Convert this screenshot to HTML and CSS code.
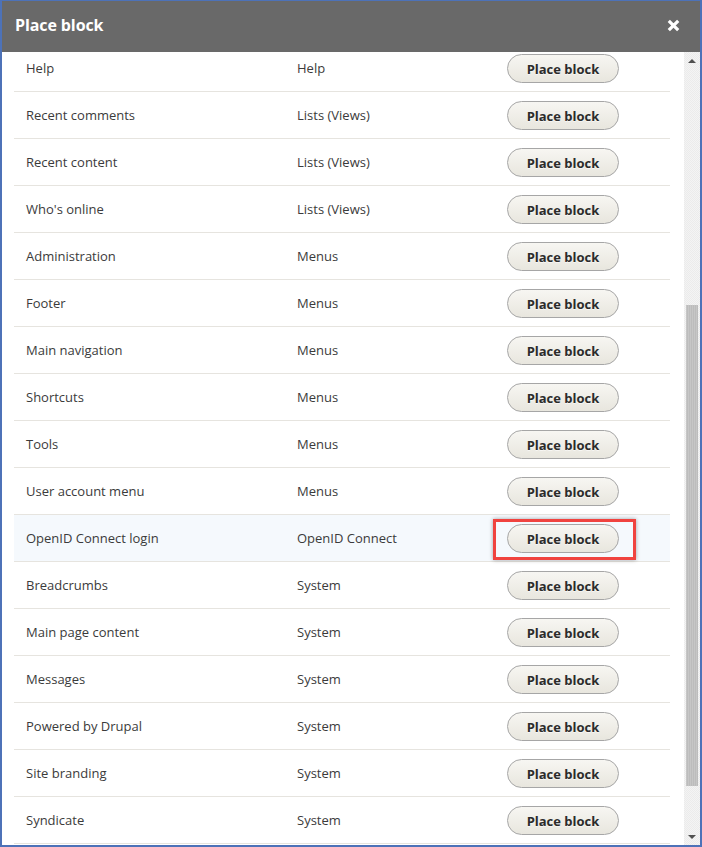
FILE: index.html
```html
<!DOCTYPE html>
<html>
<head>
<meta charset="utf-8">
<link rel="stylesheet" href="styles.css">
</head>
<body>
<div class="dialog">
  <div class="titlebar">
    <span class="title">Place block</span>
    <button class="close" aria-label="Close">
      <svg width="13" height="13" viewBox="0 0 13 13"><path d="M1.8 1.8 L11.2 11.2 M11.2 1.8 L1.8 11.2" stroke="#fff" stroke-width="3.2" stroke-linecap="butt"/></svg>
    </button>
  </div>
  <div class="body">
    <div class="viewport">
      <div class="list">
        <div class="row"><span class="c-name">Help</span><span class="c-cat">Help</span><span class="c-op"><a class="btn">Place block</a></span></div>
        <div class="row"><span class="c-name">Recent comments</span><span class="c-cat">Lists (Views)</span><span class="c-op"><a class="btn">Place block</a></span></div>
        <div class="row"><span class="c-name">Recent content</span><span class="c-cat">Lists (Views)</span><span class="c-op"><a class="btn">Place block</a></span></div>
        <div class="row"><span class="c-name">Who's online</span><span class="c-cat">Lists (Views)</span><span class="c-op"><a class="btn">Place block</a></span></div>
        <div class="row"><span class="c-name">Administration</span><span class="c-cat">Menus</span><span class="c-op"><a class="btn">Place block</a></span></div>
        <div class="row"><span class="c-name">Footer</span><span class="c-cat">Menus</span><span class="c-op"><a class="btn">Place block</a></span></div>
        <div class="row"><span class="c-name">Main navigation</span><span class="c-cat">Menus</span><span class="c-op"><a class="btn">Place block</a></span></div>
        <div class="row"><span class="c-name">Shortcuts</span><span class="c-cat">Menus</span><span class="c-op"><a class="btn">Place block</a></span></div>
        <div class="row"><span class="c-name">Tools</span><span class="c-cat">Menus</span><span class="c-op"><a class="btn">Place block</a></span></div>
        <div class="row"><span class="c-name">User account menu</span><span class="c-cat">Menus</span><span class="c-op"><a class="btn">Place block</a></span></div>
        <div class="row hl"><span class="c-name">OpenID Connect login</span><span class="c-cat">OpenID Connect</span><span class="c-op"><a class="btn">Place block</a><span class="callout"></span></span></div>
        <div class="row"><span class="c-name">Breadcrumbs</span><span class="c-cat">System</span><span class="c-op"><a class="btn">Place block</a></span></div>
        <div class="row"><span class="c-name">Main page content</span><span class="c-cat">System</span><span class="c-op"><a class="btn">Place block</a></span></div>
        <div class="row"><span class="c-name">Messages</span><span class="c-cat">System</span><span class="c-op"><a class="btn">Place block</a></span></div>
        <div class="row"><span class="c-name">Powered by Drupal</span><span class="c-cat">System</span><span class="c-op"><a class="btn">Place block</a></span></div>
        <div class="row"><span class="c-name">Site branding</span><span class="c-cat">System</span><span class="c-op"><a class="btn">Place block</a></span></div>
        <div class="row"><span class="c-name">Syndicate</span><span class="c-cat">System</span><span class="c-op"><a class="btn">Place block</a></span></div>
      </div>
    </div>
    <div class="scrollbar">
      <div class="arrow up"></div>
      <div class="track"><div class="thumb"></div></div>
      <div class="arrow down"></div>
    </div>
  </div>
</div>
</body>
</html>
```
FILE: styles.css
```css
html, body {
  margin: 0;
  padding: 0;
  width: 702px;
  height: 847px;
  overflow: hidden;
  background: #fff;
}
.dialog {
  box-sizing: border-box;
  width: 702px;
  height: 847px;
  border: 2px solid #4d72b8;
  border-top-width: 1px;
  display: flex;
  flex-direction: column;
  font-family: "Open Sans", "Noto Sans", sans-serif;
}
.titlebar {
  box-sizing: border-box;
  height: 51px;
  flex: none;
  background: #696969;
  display: flex;
  align-items: center;
  justify-content: space-between;
  padding: 0 20px 4px 13px;
}
.title {
  color: #fff;
  font-weight: 700;
  font-size: 16px;
  letter-spacing: -0.1px;
}
.close {
  background: none;
  border: 0;
  padding: 0;
  width: 13px;
  height: 13px;
  display: flex;
  margin-top: 1px;
}
.body {
  flex: 1;
  display: flex;
  min-height: 0;
}
.viewport {
  flex: 1;
  overflow: hidden;
  padding: 0 14px 0 12px;
}
.list {
  margin-top: -7px;
}
.row {
  height: 46px;
  border-bottom: 1px solid #e6e4df;
  display: flex;
  align-items: center;
  font-size: 13px;
  color: #3b3b3b;
}
.row.hl {
  background: #f5f9fd;
}
.c-name {
  width: 271px;
  padding-left: 12px;
  flex: none;
}
.c-cat {
  width: 198px;
  flex: none;
}
.c-op {
  position: relative;
  padding-left: 12px;
  display: flex;
  align-items: center;
}
.btn {
  box-sizing: border-box;
  display: inline-flex;
  align-items: center;
  justify-content: center;
  width: 112px;
  height: 29px;
  border: 1px solid #a6a6a6;
  border-radius: 15px;
  background: linear-gradient(#f7f6f2, #e8e6de);
  color: #2b2b2b;
  font-weight: 700;
  font-size: 13px;
  text-shadow: 0 1px rgba(255,255,255,0.6);
  margin-top: 1px;
}
.callout {
  position: absolute;
  left: -2px;
  top: -4px;
  width: 143px;
  height: 41px;
  box-sizing: border-box;
  border: 3px solid #f0433f;
  box-shadow: 0 0 4px rgba(0,0,0,0.35);
}
.scrollbar {
  width: 16px;
  flex: none;
  display: flex;
  flex-direction: column;
  background-color: #f0f0f0;
  background-image: repeating-conic-gradient(#f4f4f4 0 25%, #ebebeb 0 50%);
  background-size: 2px 2px;
}
.arrow {
  height: 17px;
  flex: none;
  display: flex;
  align-items: center;
  justify-content: center;
}
.arrow::before {
  content: "";
  border-left: 4px solid transparent;
  border-right: 4px solid transparent;
}
.arrow.up::before {
  border-bottom: 4px solid #505050;
}
.arrow.down::before {
  border-top: 4px solid #505050;
}
.track {
  flex: 1;
  padding: 236px 2px 0 2px;
}
.thumb {
  height: 481px;
  background-color: #c2c2c2;
  background-image: repeating-linear-gradient(90deg, #c6c6c6 0 1px, #bcbcbc 1px 2px);
}
```
